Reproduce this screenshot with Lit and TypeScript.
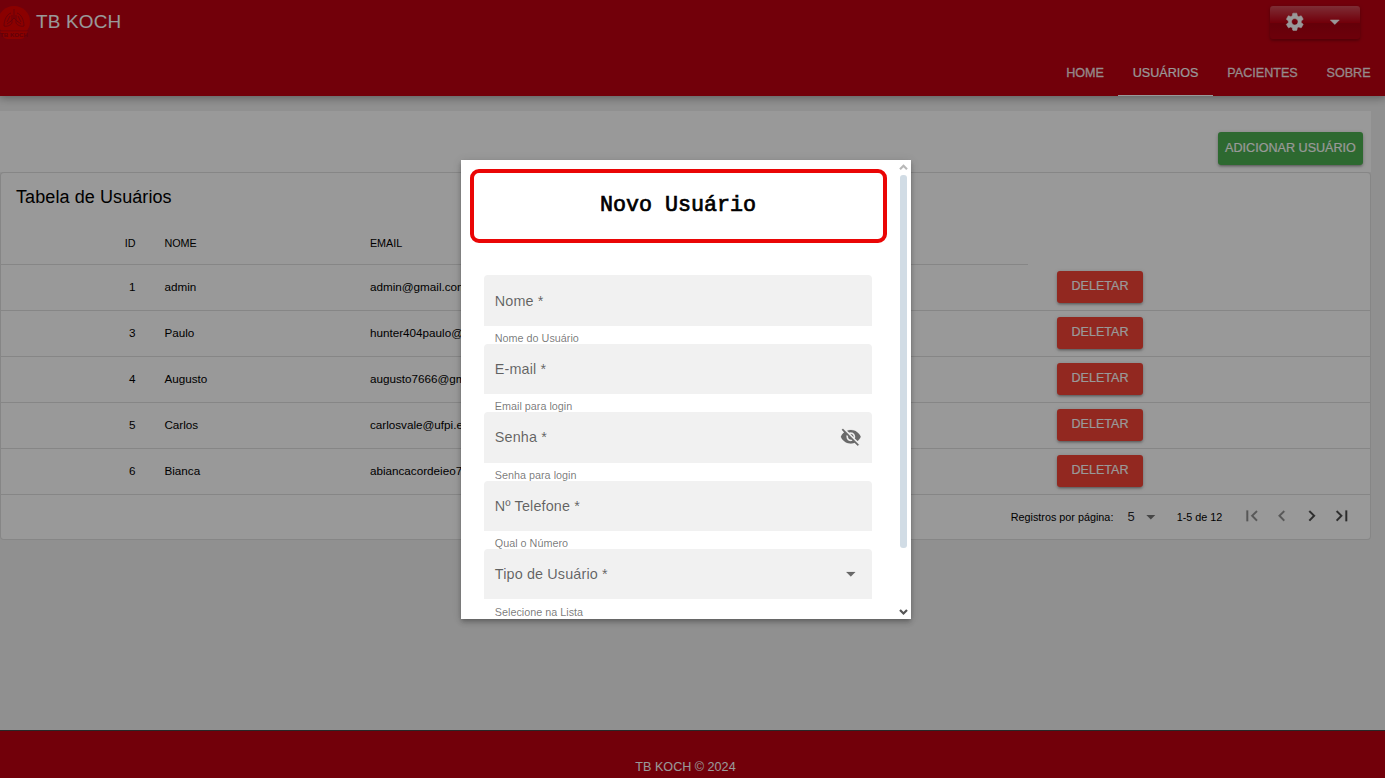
import { LitElement, html, css, svg, nothing } from "lit";
import { customElement, property } from "lit/decorators.js";

const ICONS: Record<string, string> = {
  settings:
    "M19.14 12.94c.04-.3.06-.61.06-.94 0-.32-.02-.64-.07-.94l2.03-1.58c.18-.14.23-.41.12-.61l-1.92-3.32c-.12-.22-.37-.29-.59-.22l-2.39.96c-.5-.38-1.03-.7-1.62-.94l-.36-2.54c-.04-.24-.24-.41-.48-.41h-3.84c-.24 0-.43.17-.47.41l-.36 2.54c-.59.24-1.13.57-1.62.94l-2.39-.96c-.22-.08-.47 0-.59.22L2.74 8.87c-.12.21-.08.47.12.61l2.03 1.58c-.05.3-.09.63-.09.94s.02.64.07.94l-2.03 1.58c-.18.14-.23.41-.12.61l1.92 3.32c.12.22.37.29.59.22l2.39-.96c.5.38 1.03.7 1.62.94l.36 2.54c.05.24.24.41.48.41h3.84c.24 0 .44-.17.47-.41l.36-2.54c.59-.24 1.13-.56 1.62-.94l2.39.96c.22.08.47 0 .59-.22l1.92-3.32c.12-.22.07-.47-.12-.61l-2.01-1.58zM12 15.6c-1.98 0-3.6-1.62-3.6-3.6s1.62-3.6 3.6-3.6 3.6 1.62 3.6 3.6-1.62 3.6-3.6 3.6z",
  down: "M7 10l5 5 5-5z",
  first: "M18.41 16.59L13.82 12l4.59-4.59L17 6l-6 6 6 6zM6 6h2v12H6z",
  prev: "M15.41 7.41L14 6l-6 6 6 6 1.41-1.41L10.83 12z",
  next: "M10 6L8.59 7.41 13.17 12l-4.58 4.59L10 18l6-6z",
  last: "M5.59 7.41L10.18 12l-4.59 4.59L7 18l6-6-6-6zM16 6h2v12h-2z",
  hidden:
    "M12 7c2.76 0 5 2.24 5 5 0 .65-.13 1.26-.36 1.83l2.92 2.92c1.51-1.26 2.7-2.89 3.43-4.75-1.73-4.39-6-7.5-11-7.5-1.4 0-2.74.25-3.98.7l2.16 2.16C10.74 7.13 11.35 7 12 7zM2 4.27l2.28 2.28.46.46C3.08 8.3 1.78 10.02 1 12c1.73 4.39 6 7.5 11 7.5 1.55 0 3.03-.3 4.38-.84l.42.42L19.73 22 21 20.73 3.27 3 2 4.27zM7.53 9.8l1.55 1.55c-.05.21-.08.43-.08.65 0 1.66 1.34 3 3 3 .22 0 .44-.03.65-.08l1.55 1.55c-.67.33-1.41.53-2.2.53-2.76 0-5-2.24-5-5 0-.79.2-1.53.53-2.2zm4.31-.78l3.15 3.15.02-.16c0-1.66-1.34-3-3-3l-.17.01z",
};

@customElement("md-icon")
export class MdIcon extends LitElement {
  @property() name = "";
  static styles = css`
    :host { display: block; width: 21.6px; height: 21.6px; flex: none; }
    svg { display: block; width: 100%; height: 100%; fill: currentColor; stroke: currentColor; stroke-width: var(--icon-stroke, 0); }
  `;
  render() {
    return html`<svg viewBox="0 0 24 24">${svg`<path d=${ICONS[this.name] ?? ""}></path>`}</svg>`;
  }
}

@customElement("form-field")
export class FormField extends LitElement {
  @property() label = "";
  @property() hint = "";
  @property() icon = "";
  static styles = css`
    :host { display: block; height: 68.4px; }
    .control {
      display: flex; align-items: center; justify-content: space-between;
      box-sizing: border-box; height: 50.4px; padding: 0 10.8px;
      background: #f1f1f1; border-radius: 4px 4px 0 0;
      color: rgba(0, 0, 0, 0.6); font-size: 14.4px; letter-spacing: 0.135px;
    }
    .icon { margin-bottom: 1.6px; color: rgba(0, 0, 0, 0.56); --icon-stroke: 0.2; }
    .hint {
      height: 18px; padding: 7.2px 10.8px 0; box-sizing: border-box;
      font-size: 10.8px; line-height: 11px; color: rgba(0, 0, 0, 0.54); white-space: nowrap;
    }
  `;
  render() {
    return html`
      <div class="control">
        <span>${this.label} *</span>
        ${this.icon ? html`<md-icon class="icon" name=${this.icon}></md-icon>` : nothing}
      </div>
      <div class="hint">${this.hint}</div>
    `;
  }
}

const USERS = [
  { id: 1, name: "admin", email: "admin@gmail.com" },
  { id: 3, name: "Paulo", email: "hunter404paulo@gmail.com" },
  { id: 4, name: "Augusto", email: "augusto7666@gmail.com" },
  { id: 5, name: "Carlos", email: "carlosvale@ufpi.edu.br" },
  { id: 6, name: "Bianca", email: "abiancacordeieo7@gmail.com" },
];

const FIELDS = [
  { label: "Nome", hint: "Nome do Usuário", icon: "" },
  { label: "E-mail", hint: "Email para login", icon: "" },
  { label: "Senha", hint: "Senha para login", icon: "hidden" },
  { label: "Nº Telefone", hint: "Qual o Número", icon: "" },
  { label: "Tipo de Usuário", hint: "Selecione na Lista", icon: "down" },
];

const TABS = ["HOME", "USUÁRIOS", "PACIENTES", "SOBRE"];

@customElement("app-root")
export class AppRoot extends LitElement {
  static styles = css`
    :host {
      display: flex; flex-direction: column; position: relative;
      width: 100%; height: 778px; overflow: hidden;
      background: #f0f0f0; color: #000;
      font-family: "Liberation Sans", Arial, sans-serif; font-size: 12.6px;
    }
    .header {
      flex: none; height: 96px; background: #be0012; color: #fff; z-index: 1;
      box-shadow: 0 0 9px 2px rgba(0, 0, 0, 0.2), 0 0 9px rgba(0, 0, 0, 0.24);
    }
    .toolbar { display: flex; justify-content: space-between; height: 50px; }
    .brand { display: flex; align-items: flex-start; padding-top: 6px; }
    .logo { display: block; width: 31px; height: 33px; }
    .logo-text { font: bold 6px "Liberation Sans", Arial, sans-serif; }
    .name { margin-left: 5px; font-size: 18.9px; letter-spacing: 0.19px; line-height: 31px; }
    .settings {
      display: flex; align-items: center; box-sizing: border-box;
      width: 90px; height: 33px; margin: 6px 25px 0 0; padding: 0 14.4px 1px; gap: 18px;
      border-radius: 3px;
      background: linear-gradient(to bottom, rgba(255, 255, 255, 0.3), rgba(255, 255, 255, 0) 50%, rgba(0, 0, 0, 0.12) 51%, rgba(0, 0, 0, 0.04));
      box-shadow: 0 1px 4px rgba(0, 0, 0, 0.2), 0 2px 2px rgba(0, 0, 0, 0.14);
      --icon-stroke: 0.6;
    }
    .tabs { display: flex; justify-content: flex-end; height: 46px; }
    .tab {
      display: flex; align-items: center; padding: 1px 14.4px 0; box-sizing: border-box;
      border-bottom: 1px solid transparent; color: rgba(255, 255, 255, 0.85);
      -webkit-text-stroke: 0.3px currentColor;
    }
    .tab.active { border-color: #fff; color: #fff; -webkit-text-stroke: 0.15px currentColor; }
    .page { flex: 1; padding: 15px 14px 0 0; }
    .actions {
      display: flex; justify-content: flex-end; align-items: flex-start; box-sizing: border-box;
      height: 61px; padding: 21px 8px 0 0; background: #fff;
    }
    .btn {
      box-sizing: border-box; height: 32px; border-radius: 3px; color: #fff;
      line-height: 30px; text-align: center; white-space: nowrap;
      -webkit-text-stroke: 0.15px currentColor;
      box-shadow: 0 1px 4px rgba(0, 0, 0, 0.2), 0 2px 2px rgba(0, 0, 0, 0.14), 0 3px 1px -2px rgba(0, 0, 0, 0.12);
    }
    .add { width: 145px; height: 33px; background: #4caf50; line-height: 32px; }
    .delete { width: 86px; background: #f44336; }
    .card {
      box-sizing: border-box; height: 368px; background: #fff;
      border: 1px solid rgba(0, 0, 0, 0.12); border-radius: 4px;
    }
    .title { height: 49px; padding-left: 15px; font-size: 18px; letter-spacing: 0.09px; line-height: 48px; }
    .row {
      display: grid; grid-template-columns: 149px 205.5px 672.5px 1fr;
      height: 46px; box-sizing: border-box; align-items: center; padding-bottom: 1px;
      border-bottom: 1px solid rgba(0, 0, 0, 0.12); font-size: 11.7px;
    }
    .cell { padding: 0 14.4px 2px; white-space: nowrap; }
    .head { height: 43px; padding: 0; border-bottom: 0; font-size: 10.8px; align-items: stretch; line-height: 42px; }
    .head .cell { padding-bottom: 0; border-bottom: 1px solid rgba(0, 0, 0, 0.12); }
    .num { text-align: right; }
    .act { padding: 0 0 0 29px; font-size: 12.6px; }
    .pager {
      display: flex; align-items: center; justify-content: flex-end;
      height: 44px; padding-right: 17px; font-size: 10.8px;
    }
    .pager .count { margin: 0 0 2px 14px; font-size: 13px; color: rgba(0, 0, 0, 0.87); }
    .pager .arrow { margin: 0 15.5px 1px 5px; color: rgba(0, 0, 0, 0.54); }
    .pager .range { margin-right: 18.5px; }
    .nav { display: flex; gap: 8.6px; padding-bottom: 1.5px; color: rgba(0, 0, 0, 0.7); --icon-stroke: 0.2; }
    .off { opacity: 0.6; }
    .footer {
      flex: none; height: 48px; box-sizing: border-box; padding: 29px 14px 0 0;
      border-top: 1px solid #444; background: #be0012; color: #fff;
      text-align: center; line-height: 14px;
    }
    .backdrop {
      position: absolute; inset: 0; z-index: 2; background: rgba(0, 0, 0, 0.4);
      display: flex; align-items: center; justify-content: center; padding: 1px 13px 0 0;
    }
    .dialog {
      display: flex; width: 450px; height: 459px; overflow: hidden; background: #fff;
      box-shadow: 0 2px 4px -1px rgba(0, 0, 0, 0.2), 0 4px 5px rgba(0, 0, 0, 0.14), 0 1px 9px rgba(0, 0, 0, 0.12);
    }
    .body { width: 435px; padding: 9px 0 0 9px; box-sizing: border-box; }
    .heading {
      box-sizing: border-box; width: 417px; height: 74px; margin-bottom: 32.4px; padding-right: 1px;
      border: 4px solid #ea0606; border-radius: 9px; text-align: center;
      font: 21.7px/66px "Courier New", "Liberation Mono", monospace;
      -webkit-text-stroke: 0.7px currentColor;
    }
    .form { width: 388px; margin-left: 14px; }
    .scroll { flex: 1; display: flex; flex-direction: column; align-items: center; padding: 3px 0 3px 0; }
    .chev { display: block; width: 9px; height: 8px; fill: none; stroke-width: 2.2; }
    .up { stroke: #b8b8b8; }
    .dn { stroke: #555; }
    .thumb { width: 7px; height: 373px; margin: 4px 0 auto; border-radius: 3px; background: #d1dce5; }
  `;

  render() {
    return html`
      <header class="header">
        <div class="toolbar">
          <div class="brand">
            <svg class="logo" viewBox="0 0 31 33">
              <ellipse cx="14" cy="15.5" rx="16" ry="15.5" fill="#e80000"></ellipse>
              <path d="M0 25h28l-4 6.5q-1.500 1.500-4 1.500H8q-2.500 0-4-1.500z" fill="#e80000"></path>
              <g fill="none" stroke="#a80010" stroke-width="0.9">
                <path d="M14 3v10M14 12l-4 4M14 12l4 4"></path>
                <path d="M11 7C7 8 4 14 4 20c3 1 7-1 8-3V9M17 7c4 1 7 7 7 13-3 1-7-1-8-3V9"></path>
                <path d="M10 10l-3 6M18 10l3 6M7 18l4-3M21 18l-4-3"></path>
              </g>
              <rect x="0" y="24.500" width="29" height="0.800" fill="#b00010"></rect>
              <text class="logo-text" x="0" y="30.500" textLength="28" lengthAdjust="spacingAndGlyphs" fill="#a00010">TB KOCH</text>
            </svg>
            <span class="name">TB KOCH</span>
          </div>
          <div class="settings">
            <md-icon name="settings"></md-icon>
            <md-icon name="down"></md-icon>
          </div>
        </div>
        <nav class="tabs">
          ${TABS.map((t) => html`<div class="tab ${t === "USUÁRIOS" ? "active" : ""}">${t}</div>`)}
        </nav>
      </header>

      <main class="page">
        <div class="actions"><div class="btn add">ADICIONAR USUÁRIO</div></div>
        <section class="card">
          <div class="title">Tabela de Usuários</div>
          <div class="row head">
            <div class="cell num">ID</div>
            <div class="cell">NOME</div>
            <div class="cell">EMAIL</div>
          </div>
          ${USERS.map(
            (u) => html`
              <div class="row">
                <div class="cell num">${u.id}</div>
                <div class="cell">${u.name}</div>
                <div class="cell">${u.email}</div>
                <div class="act"><div class="btn delete">DELETAR</div></div>
              </div>
            `
          )}
          <div class="pager">
            <span>Registros por página:</span>
            <span class="count">5</span>
            <md-icon class="arrow" name="down"></md-icon>
            <span class="range">1-5 de 12</span>
            <div class="nav">
              <md-icon class="off" name="first"></md-icon>
              <md-icon class="off" name="prev"></md-icon>
              <md-icon name="next"></md-icon>
              <md-icon name="last"></md-icon>
            </div>
          </div>
        </section>
      </main>

      <footer class="footer">TB KOCH © 2024</footer>

      <div class="backdrop">
        <div class="dialog">
          <div class="body">
            <div class="heading">Novo Usuário</div>
            <div class="form">
              ${FIELDS.map(
                (f) => html`<form-field label=${f.label} hint=${f.hint} icon=${f.icon}></form-field>`
              )}
            </div>
          </div>
          <div class="scroll">
            <svg class="chev up" viewBox="0 0 9 8"><path d="M1 6.200l3.500-3.500L8 6.200"></path></svg>
            <div class="thumb"></div>
            <svg class="chev dn" viewBox="0 0 9 8"><path d="M1 2l3.500 3.500L8 2"></path></svg>
          </div>
        </div>
      </div>
    `;
  }
}
